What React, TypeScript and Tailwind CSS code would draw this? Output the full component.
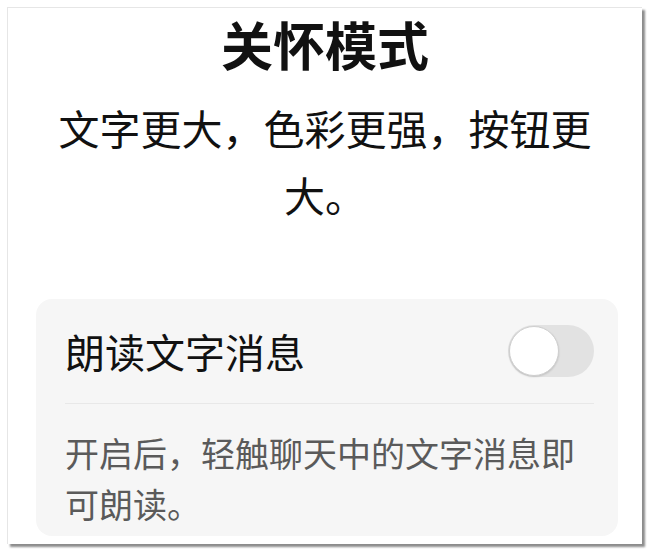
import React from "react";

export default function App() {
  const font = { fontFamily: '"Noto Sans CJK SC", "Noto Sans", sans-serif' };
  return (
    <div className="w-[650px] h-[554px] bg-white overflow-hidden" style={font}>
      <div className="ml-[7px] mt-[7px] w-[635px] h-[537px] bg-white border-l border-t border-[#e6e6e6] shadow-[3px_3px_2px_#8c8c8c] flex flex-col">
        <h1 className="pt-[6px] text-center text-[52px] leading-[60px] font-bold text-[#111]">
          关怀模式
        </h1>
        <p className="mt-[20px] px-[40px] text-center text-[41px] leading-[67px] text-[#111]">
          文字更大，色彩更强，按钮更大。
        </p>
        <div className="mt-[71px] ml-[28px] w-[582px] h-[237px] bg-[#f6f6f6] rounded-[16px] pl-[29px] pr-[24px] flex flex-col">
          <div className="h-[105px] flex items-center justify-between border-b border-[#e8e8e8]">
            <span className="text-[40px] leading-[50px] text-[#111]">朗读文字消息</span>
            <div className="w-[86px] h-[52px] rounded-full bg-[#e2e2e2] flex items-center p-[1px]">
              <div className="w-[50px] h-[50px] rounded-full bg-white border border-[#cfcfcf] shadow-[0_1px_2px_rgba(0,0,0,0.15)]" />
            </div>
          </div>
          <p className="pt-[23px] text-[34px] leading-[51px] text-[#5a5a5a]">
            开启后，轻触聊天中的文字消息即可朗读。
          </p>
        </div>
      </div>
    </div>
  );
}
